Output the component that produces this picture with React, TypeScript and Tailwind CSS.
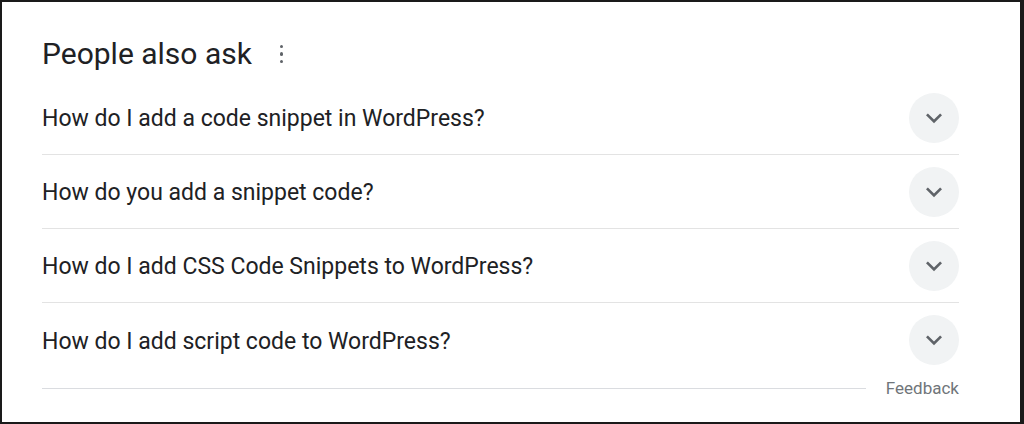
import React from "react";

const questions = [
  "How do I add a code snippet in WordPress?",
  "How do you add a snippet code?",
  "How do I add CSS Code Snippets to WordPress?",
  "How do I add script code to WordPress?",
];

function Chevron() {
  return (
    <svg width="32" height="32" viewBox="0 0 24 24" fill="#5f6368">
      <path d="M7.41 8.59 12 13.17l4.59-4.58L18 10l-6 6-6-6 1.41-1.41z" />
    </svg>
  );
}

export default function App() {
  return (
    <div
      className="h-[424px] w-[1024px] overflow-hidden border-y-2 border-l-2 border-r-[4px] border-[#1a1a1a] bg-white"
      style={{ fontFamily: "Roboto, 'Liberation Sans', sans-serif" }}
    >
      <div className="pl-[40px] pr-[61px] pt-[32px]">
        <div className="flex h-[40px] items-center">
          <h2 className="text-[30px] leading-[40px] text-[#202124]">People also ask</h2>
          <div className="ml-[28px] flex flex-col gap-[4px]">
            <span className="h-[3.5px] w-[3.5px] rounded-full bg-[#5f6368]" />
            <span className="h-[3.5px] w-[3.5px] rounded-full bg-[#5f6368]" />
            <span className="h-[3.5px] w-[3.5px] rounded-full bg-[#5f6368]" />
          </div>
        </div>
        <div className="mt-[7px]">
          {questions.map((q, i) => (
            <div
              key={q}
              className={`flex h-[74px] items-center justify-between ${
                i < questions.length - 1 ? "border-b border-[#e3e3e3]" : ""
              }`}
            >
              <span className="mt-[4px] text-[23px] text-[#202124]">{q}</span>
              <div className="flex h-[50px] w-[50px] items-center justify-center rounded-full bg-[#f1f3f4]">
                <Chevron />
              </div>
            </div>
          ))}
        </div>
        <div className="-mt-[1px] flex items-center gap-[20px]">
          <div className="h-px flex-1 bg-[#dadce0]" />
          <span className="text-[17px] text-[#70757a]">Feedback</span>
        </div>
      </div>
    </div>
  );
}
